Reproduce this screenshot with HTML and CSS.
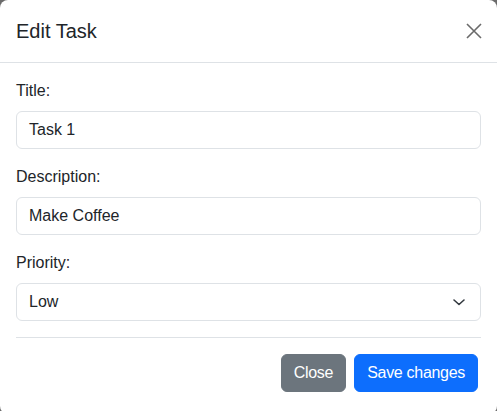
FILE: index.html
```html
<!DOCTYPE html>
<html>
<head>
<meta charset="utf-8">
<link rel="stylesheet" href="styles.css">
</head>
<body>
<div class="modal">
  <div class="modal-header">
    <h5 class="modal-title">Edit Task</h5>
    <button class="btn-close" aria-label="Close">
      <svg width="16" height="16" viewBox="0 0 16 16"><path d="M1 1L15 15M15 1L1 15" stroke="#6a6a6a" stroke-width="1.6" fill="none"/></svg>
    </button>
  </div>
  <div class="modal-body">
    <div class="field">
      <label class="form-label">Title:</label>
      <div class="form-control">Task 1</div>
    </div>
    <div class="field">
      <label class="form-label">Description:</label>
      <div class="form-control">Make Coffee</div>
    </div>
    <div class="field">
      <label class="form-label">Priority:</label>
      <div class="form-control form-select">
        <span>Low</span>
        <svg width="16" height="16" viewBox="0 0 16 16"><path d="M3 6L8 10.5L13 6" stroke="#343a40" stroke-width="1.6" fill="none" stroke-linecap="round" stroke-linejoin="round"/></svg>
      </div>
    </div>
    <hr class="divider">
  </div>
  <div class="modal-footer">
    <button class="btn btn-secondary">Close</button>
    <button class="btn btn-primary">Save changes</button>
  </div>
</div>
</body>
</html>
```
FILE: styles.css
```css
html, body {
  margin: 0;
  padding: 0;
  height: 100%;
  overflow: hidden;
}
body {
  background: #6b6b6b;
  font-family: "Liberation Sans", Arial, sans-serif;
  font-size: 16px;
  line-height: 1.5;
  color: #212529;
}
.modal {
  background: #fff;
  width: 497px;
  height: 414px;
  border-radius: 8px;
  display: flex;
  flex-direction: column;
}
.modal-header {
  display: flex;
  align-items: center;
  padding: 16px;
  border-bottom: 1px solid #dee2e6;
}
.modal-title {
  margin: 0;
  font-size: 20px;
  font-weight: 500;
  line-height: 30px;
  flex: 1;
}
.btn-close {
  border: 0;
  background: none;
  padding: 4px;
  width: 24px;
  height: 24px;
  margin-right: -5px;
  display: flex;
  align-items: center;
  justify-content: center;
}
.modal-body {
  padding: 16px 16px 0;
}
.field {
  margin-bottom: 16px;
}
.form-label {
  display: block;
  margin-bottom: 8px;
  line-height: 24px;
}
.form-control {
  height: 38px;
  box-sizing: border-box;
  border: 1px solid #dee2e6;
  border-radius: 6px;
  padding: 6px 12px;
  line-height: 24px;
}
.form-select {
  display: flex;
  align-items: center;
  justify-content: space-between;
  padding-right: 13px;
}
.divider {
  border: 0;
  border-top: 1px solid #dee2e6;
  margin: 0;
}
.modal-footer {
  display: flex;
  justify-content: flex-end;
  gap: 8px;
  padding: 16px 19px 16px 16px;
}
.btn {
  font-family: inherit;
  font-size: 16px;
  line-height: 24px;
  letter-spacing: -0.3px;
  border: 1px solid transparent;
  border-radius: 6px;
  padding: 6px 12px;
  color: #fff;
  height: 38px;
}
.btn-secondary {
  background: #6c757d;
  border-color: #6c757d;
}
.btn-primary {
  background: #0d6efd;
  border-color: #0d6efd;
}
```
